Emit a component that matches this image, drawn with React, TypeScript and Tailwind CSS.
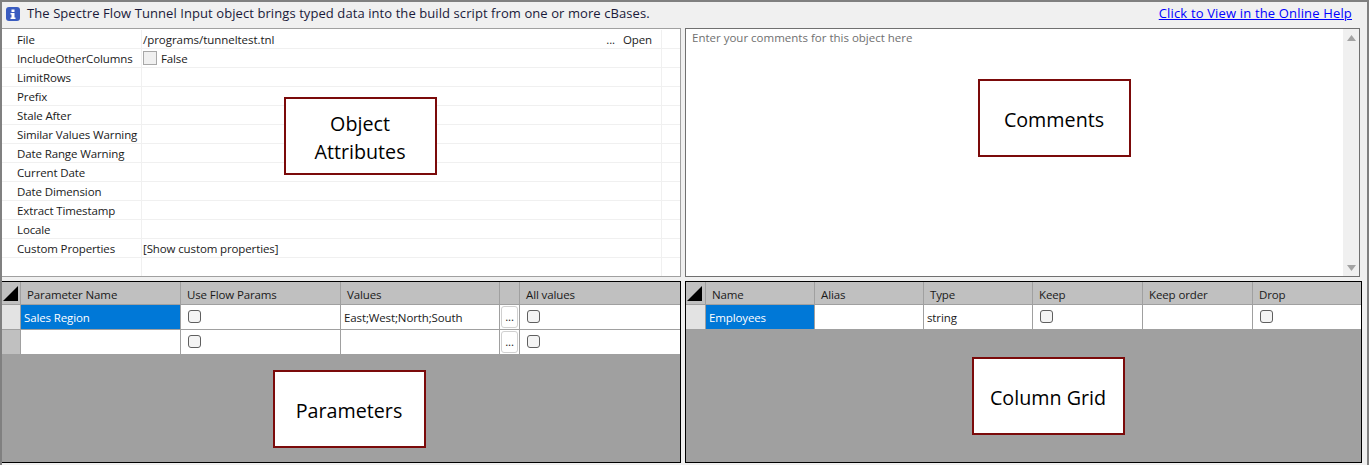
const font = "font-['Open_Sans','Noto_Sans',sans-serif]";

const attributes = [
  "File",
  "IncludeOtherColumns",
  "LimitRows",
  "Prefix",
  "Stale After",
  "Similar Values Warning",
  "Date Range Warning",
  "Current Date",
  "Date Dimension",
  "Extract Timestamp",
  "Locale",
  "Custom Properties",
  "",
];

function Check() {
  return (
    <span className="block w-[13px] h-[13px] rounded-[3px] border border-[#5f5f5f] bg-[#f4f4f4]" />
  );
}

function Callout({ className, children }: { className: string; children: React.ReactNode }) {
  return (
    <div
      className={`absolute w-[153px] h-[78px] pt-[3px] pr-[1px] border-2 border-[#7b0a0a] bg-white flex items-center justify-center text-center text-[19.7px] leading-[28px] text-black ${className}`}
    >
      {children}
    </div>
  );
}

function RowHead({ active }: { active?: boolean }) {
  return <div className={`border-r border-[#a0a0a0] ${active ? "bg-[#e3e3e3]" : "bg-[#c0c0c0]"}`} />;
}

function Corner() {
  return (
    <div className="relative border-r border-[#a0a0a0] bg-[#c0c0c0]">
      <svg className="absolute left-[1px] top-[4px]" width="15" height="15" viewBox="0 0 15 15">
        <path d="M15 0V15H0Z" fill="#000" />
      </svg>
    </div>
  );
}

function HeadCell({ children }: { children?: React.ReactNode }) {
  return <div className="border-r border-[#a0a0a0] pl-[6px] truncate">{children}</div>;
}

function ParamRow({ name, values, selected }: { name?: string; values?: string; selected?: boolean }) {
  return (
    <div className="grid grid-cols-[19px_160px_160px_159px_20px_160px] grid-rows-[24px] h-[25px] border-b border-[#a0a0a0] leading-[26px]">
      <RowHead active={selected} />
      <div className={`border-r border-[#a0a0a0] pl-[3px] ${selected ? "bg-[#0078d7] text-white" : "bg-white"}`}>{name}</div>
      <div className="border-r border-[#a0a0a0] bg-white pl-[7px] pt-[5px]"><Check /></div>
      <div className="border-r border-[#a0a0a0] bg-white pl-[3px] truncate">{values}</div>
      <div className="border-r border-[#a0a0a0] bg-white px-[1px] pt-[1px]">
        <div className="h-[22px] rounded-[3px] border border-[#d0d0d0] bg-white text-center leading-[20px]">...</div>
      </div>
      <div className="bg-white pl-[7px] pt-[5px]"><Check /></div>
    </div>
  );
}

export default function App() {
  return (
    <div className={`relative w-[1369px] h-[465px] overflow-hidden bg-[#f0f0f0] border-2 border-b-0 border-[#808080] text-[12px] text-[#1a1a1a] ${font}`}>
      {/* Top message bar */}
      <div className="flex items-center h-[26px] pb-[2px] pl-[4px] pr-[15px]">
        <svg width="14" height="14" viewBox="0 0 14 14">
          <rect width="14" height="14" rx="3" fill="#3a5cc0" />
          <rect x="5.5" y="2.5" width="3" height="2.5" fill="#fff" />
          <path d="M4.5 6H8.5V10.5H9.5V12H4.5V10.5H5.5V7.5H4.5Z" fill="#fff" />
        </svg>
        <span className="ml-[7px] text-[13px] text-[#1a1a3a] tracking-[0.08px]">
          The Spectre Flow Tunnel Input object brings typed data into the build script from one or more cBases.
        </span>
        <a className="ml-auto text-[13px] text-[#0000ff] underline tracking-[0.16px]">Click to View in the Online Help</a>
      </div>

      <div className="flex gap-[4px] pr-[5px]">
        {/* Object attributes */}
        <div className="w-[679px] h-[249px] pt-[1px] bg-white border border-[#a0a0a0] border-l-0 text-[11.5px] tracking-[-0.12px]">
          {attributes.map((label, i) => (
            <div key={i} className="grid grid-cols-[140px_520px_1fr] grid-rows-[18px] h-[19px] border-b border-[#f0f0f0] last:border-b-0 leading-[20px]">
              <div className="pl-[15px] border-r border-[#f0f0f0] whitespace-nowrap">{label}</div>
              <div className="border-r border-[#f0f0f0] pl-[1px] pt-[2px] flex items-center">
                {i === 0 && (
                  <>
                    <span className="tracking-[-0.04px]">/programs/tunneltest.tnl</span>
                    <span className="ml-auto">...</span>
                    <span className="ml-[8px] mr-[9px]">Open</span>
                  </>
                )}
                {i === 1 && (
                  <>
                    <span className="block w-[14px] h-[14px] mb-[2px] border border-[#a8a8a8] bg-[#f0f0f0]" />
                    <span className="ml-[4px]">False</span>
                  </>
                )}
                {i === 11 && <span>[Show custom properties]</span>}
              </div>
              <div />
            </div>
          ))}
        </div>

        {/* Comments */}
        <div className="flex w-[675px] h-[249px] bg-white border border-[#707070]">
          <div className="flex-1 px-[6px] pt-[1px] text-[11.5px] leading-[16px] text-[#707070]">Enter your comments for this object here</div>
          <div className="flex flex-col items-center justify-between w-[16px] pt-[6px] pb-[5px] bg-[#f0f0f0]">
            <svg width="9" height="6" viewBox="0 0 9 6"><path d="M4.5 0L9 6H0Z" fill="#a3a3a3" /></svg>
            <svg width="9" height="6" viewBox="0 0 9 6"><path d="M4.5 6L9 0H0Z" fill="#a3a3a3" /></svg>
          </div>
        </div>
      </div>

      <div className="flex gap-[4px] mt-[4px] pr-[5px]">
        {/* Parameters */}
        <div className="w-[679px] h-[182px] bg-[#a0a0a0] border border-l-0 border-black text-[11.5px] tracking-[-0.12px]">
          <div className="grid grid-cols-[19px_160px_160px_159px_20px_160px] grid-rows-[22px] h-[23px] leading-[25px] bg-[#c0c0c0] border-b border-[#a0a0a0]">
            <Corner />
            <HeadCell>Parameter Name</HeadCell>
            <HeadCell>Use Flow Params</HeadCell>
            <HeadCell>Values</HeadCell>
            <HeadCell />
            <div className="pl-[6px]">All values</div>
          </div>
          <ParamRow name="Sales Region" values="East;West;North;South" selected />
          <ParamRow />
        </div>

        {/* Column grid */}
        <div className="w-[677px] h-[182px] bg-[#a0a0a0] border border-black text-[11.5px] tracking-[-0.12px]">
          <div className="grid grid-cols-[20px_109px_109px_109px_110px_110px_1fr] grid-rows-[22px] h-[23px] leading-[25px] bg-[#c0c0c0] border-b border-[#a0a0a0]">
            <Corner />
            <HeadCell>Name</HeadCell>
            <HeadCell>Alias</HeadCell>
            <HeadCell>Type</HeadCell>
            <HeadCell>Keep</HeadCell>
            <HeadCell>Keep order</HeadCell>
            <div className="pl-[6px]">Drop</div>
          </div>
          <div className="grid grid-cols-[20px_109px_109px_109px_110px_110px_1fr] grid-rows-[24px] h-[25px] border-b border-[#a0a0a0] leading-[26px]">
            <RowHead active />
            <div className="border-r border-[#a0a0a0] bg-[#0078d7] text-white pl-[3px]">Employees</div>
            <div className="border-r border-[#a0a0a0] bg-white" />
            <div className="border-r border-[#a0a0a0] bg-white pl-[3px]">string</div>
            <div className="border-r border-[#a0a0a0] bg-white pl-[7px] pt-[5px]"><Check /></div>
            <div className="border-r border-[#a0a0a0] bg-white" />
            <div className="bg-white pl-[7px] pt-[5px]"><Check /></div>
          </div>
        </div>
      </div>

      {/* Annotations over the panels */}
      <Callout className="left-[282px] top-[95px]">Object<br />Attributes</Callout>
      <Callout className="left-[976px] top-[77px]">Comments</Callout>
      <Callout className="left-[271px] top-[368px]">Parameters</Callout>
      <Callout className="left-[970px] top-[355px]">Column Grid</Callout>
    </div>
  );
}
